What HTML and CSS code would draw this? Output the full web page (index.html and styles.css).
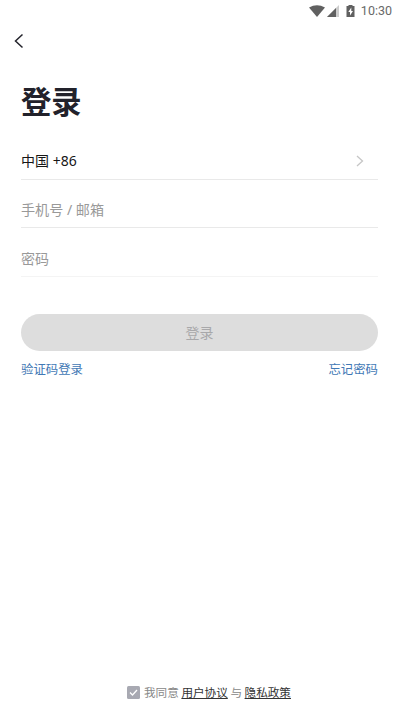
FILE: index.html
```html
<!DOCTYPE html>
<html lang="zh-CN">
<head>
<meta charset="utf-8">
<title>登录</title>
<link rel="stylesheet" href="styles.css">
</head>
<body>
<div class="screen">
  <header class="status">
    <svg class="status-icons" width="48" height="14" viewBox="0 0 48 14">
      <path d="M0 3.600Q8 -1 16 3.600L8 13Z" fill="#606060"/>
      <path d="M30 1V13H18Z" fill="#ccc"/>
      <path d="M27 4V13H18Z" fill="#606060"/>
      <path d="M39.500 1H43.500V2H45.500V13H37.500V2H39.500Z" fill="#606060"/>
      <path d="M42.300 3.500L39.300 8H41V11.500L44 7H42.300Z" fill="#fff"/>
    </svg>
    <span class="time">10:30</span>
  </header>
  <nav class="nav">
    <svg width="10" height="16" viewBox="0 0 10 16" fill="none" stroke="#24242c" stroke-width="1.5"><path d="M8.500 1.500L1.500 8L8.500 14.500"/></svg>
  </nav>
  <main class="content">
    <h1 class="title">登录</h1>
    <div class="field country"><span>中国 +86</span>
      <svg width="8" height="12" viewBox="0 0 8 12" fill="none" stroke="#c6c6c6" stroke-width="1.300"><path d="M1 1L6.500 6L1 11"/></svg>
    </div>
    <div class="field account">手机号 / 邮箱</div>
    <div class="field last">密码</div>
    <button class="submit">登录</button>
    <div class="links"><span>验证码登录</span><span>忘记密码</span></div>
  </main>
  <footer class="agreement">
    <svg class="check" width="13" height="13" viewBox="0 0 13 13"><rect width="13" height="13" rx="1.500" fill="#a8a9b2"/><path d="M3 6.500L5.500 9L10 4" fill="none" stroke="#fff" stroke-width="1.300"/></svg>
    <span>我同意 <u>用户协议</u> 与 <u>隐私政策</u></span>
  </footer>
</div>
</body>
</html>
```
FILE: styles.css
```css
* { box-sizing: border-box; }
body {
  margin: 0;
  background: #fff;
  font-family: "Noto Sans CJK SC", sans-serif;
}
.screen {
  display: flex;
  flex-direction: column;
  height: 711px;
}
.status {
  display: flex;
  justify-content: flex-end;
  align-items: center;
  height: 21px;
  padding-right: 8px;
  gap: 4px;
}
.time {
  color: #696969;
  font: 12.5px/21px Roboto, sans-serif;
}
.nav {
  height: 40px;
  padding: 12px 0 0 14px;
}
.nav svg { display: block; }
.content { padding: 0 22px 0 21px; }
.title {
  margin: 18px 0 0;
  height: 64px;
  color: #22222b;
  font-size: 30.3px;
  font-weight: 700;
  line-height: 42px;
}
.field {
  display: flex;
  align-items: center;
  justify-content: space-between;
  height: 49px;
  padding-top: 13px;
  border-bottom: 1px solid #e9e9e9;
  color: #999;
  font-family: "Noto Sans", "Noto Sans CJK SC", sans-serif;
  font-size: 14px;
  line-height: 20px;
}
.country {
  height: 37px;
  padding: 0 14px 0 0;
  color: #161616;
}
.account {
  height: 48px;
  padding-top: 12px;
  font-size: 14.1px;
}
.last { border-color: #f4f4f4; }
.submit {
  display: block;
  width: 100%;
  height: 37px;
  margin: 37px 0 0;
  padding: 0;
  border: 0;
  border-radius: 19px;
  background: #ddd;
  color: #a8a8aa;
  font: 14px/37px "Noto Sans CJK SC", sans-serif;
}
.links {
  display: flex;
  justify-content: space-between;
  margin-top: 8px;
  color: #4178b5;
  font-size: 12.4px;
  line-height: 20px;
}
.agreement {
  display: flex;
  align-items: center;
  gap: 4px;
  height: 20px;
  margin: auto 0 9px 127px;
  color: #888;
  font-size: 11.6px;
  line-height: 20px;
  white-space: nowrap;
}
.agreement u {
  color: #333;
  text-underline-offset: 1px;
}
```
